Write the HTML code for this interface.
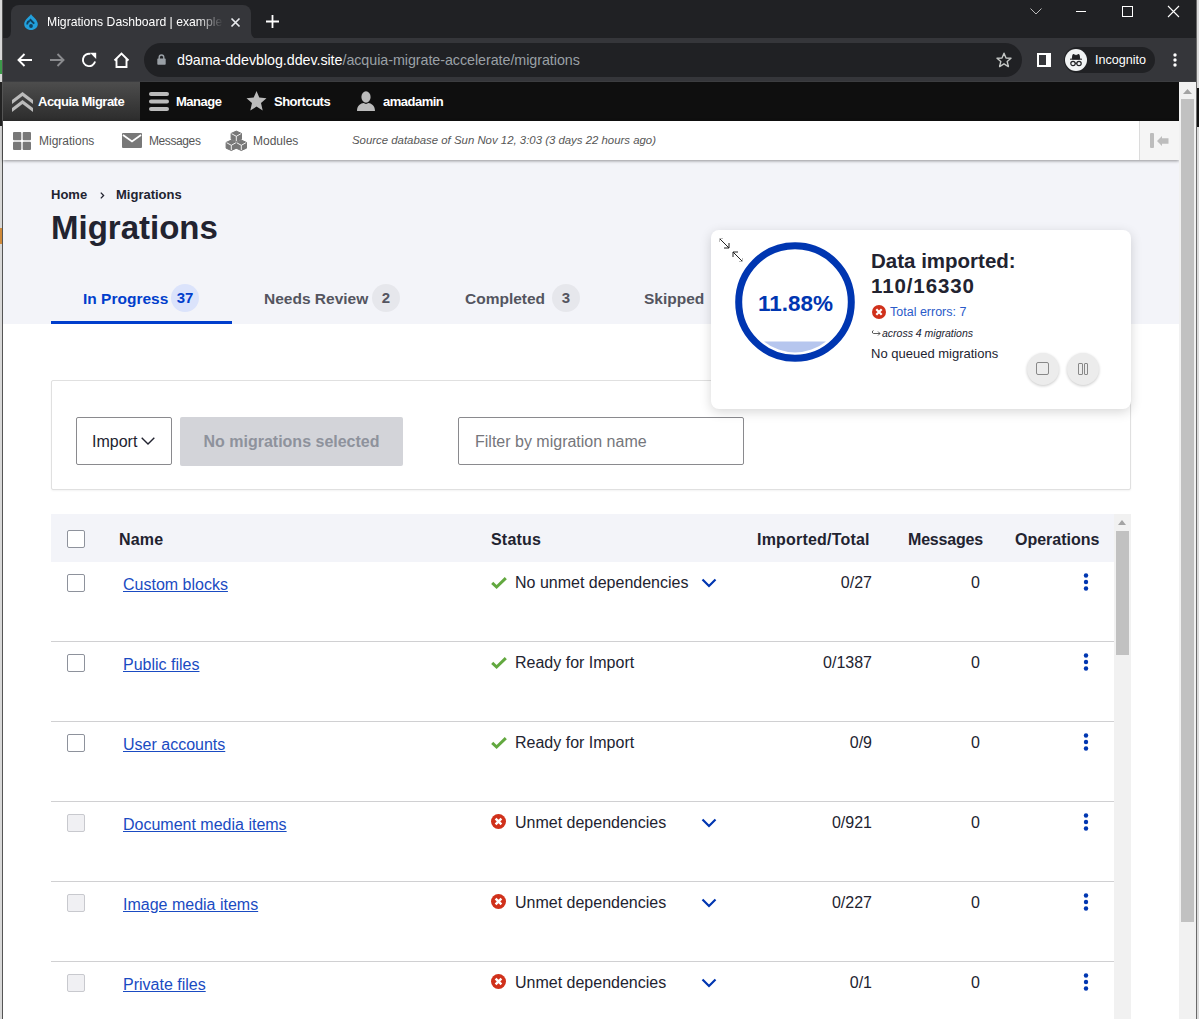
<!DOCTYPE html>
<html><head><meta charset="utf-8">
<style>
*{box-sizing:border-box;margin:0;padding:0}
html,body{width:1199px;height:1019px;overflow:hidden;background:#e9e9e9;font-family:"Liberation Sans",sans-serif}
.a{position:absolute}
svg{position:absolute;overflow:visible}
/* chrome */
#frame{left:3px;top:0;width:1193px;height:82px;background:#202124}
#tab{left:11px;top:5px;width:240px;height:33px;background:#35363a;border-radius:8px 8px 0 0}
#toolbar{left:3px;top:38px;width:1193px;height:44px;background:#35363a}
#omni{left:144px;top:43px;width:878px;height:34px;background:#202124;border-radius:17px}
#incog{left:1064px;top:47px;width:91px;height:26px;background:#202124;border-radius:13px}
.ct{color:#fff;font-size:13px;white-space:nowrap}
/* drupal toolbar */
#dtb{left:3px;top:82px;width:1176px;height:39px;background:#0f0f0f}
#am{left:3px;top:82px;width:137px;height:39px;background:linear-gradient(#4d4d4d,#2c2c2c)}
.dt{color:#fff;font-weight:bold;font-size:13px;letter-spacing:-0.5px;white-space:nowrap}
#tray{left:3px;top:121px;width:1176px;height:39px;background:#fff;box-shadow:0 1px 3px rgba(0,0,0,.4)}
.tr{color:#565656;font-size:12px;white-space:nowrap}
#page{left:3px;top:160px;width:1176px;height:164px;background:#f3f4f9}
#white{left:3px;top:324px;width:1176px;height:695px;background:#fff}
.bc{color:#222330;font-size:13px;font-weight:bold;white-space:nowrap}
h1{position:absolute;left:51px;top:209px;font-size:33px;font-weight:bold;color:#222330;white-space:nowrap}
.tab{color:#545560;font-size:15.5px;font-weight:bold;white-space:nowrap}
.badge{position:absolute;width:28px;height:28px;border-radius:14px;background:#e6e7ec;text-align:center;line-height:28px;font-size:15px;font-weight:bold;color:#545560}
#card{left:51px;top:380px;width:1080px;height:110px;background:#fff;border:1px solid #e0e0e0;border-radius:2px;box-shadow:0 1px 2px rgba(0,0,0,.05)}
#sel{left:76px;top:417px;width:96px;height:48px;border:1px solid #8a8a8e;border-radius:2px;background:#fff}
#nobtn{left:180px;top:417px;width:223px;height:49px;background:#d3d4d9;border-radius:2px;color:#8e929c;font-weight:bold;font-size:16px;text-align:center;line-height:49px;white-space:nowrap}
#filter{left:458px;top:417px;width:286px;height:48px;border:1px solid #8a8a8e;border-radius:2px;background:#fff;color:#75767b;font-size:16px;padding-left:16px;line-height:47px;white-space:nowrap}
#thead{left:51px;top:514px;width:1063px;height:48px;background:#f3f4f9}
.th{color:#222330;font-size:16px;font-weight:bold;white-space:nowrap;letter-spacing:0.2px}
.td{color:#222330;font-size:16px;white-space:nowrap}
.lnk{color:#1a4bc2;font-size:16px;text-decoration:underline;white-space:nowrap}
.cb{width:18px;height:18px;border:1px solid #8e929c;border-radius:2px;background:#fff}
.cbd{border-color:#c8c9ce;background:#f0f0f3}
.rl{left:51px;width:1063px;height:1px;background:#d0d0d2}
.num{text-align:right;width:120px}
/* popup */
#pop{left:711px;top:230px;width:420px;height:179px;background:#fff;border-radius:8px;box-shadow:0 3px 12px rgba(0,0,0,.16)}
.rbtn{width:32px;height:32px;border-radius:16px;background:#ececec;box-shadow:0 1px 3px rgba(0,0,0,.22)}
/* scrollbars */
#sb{left:1179px;top:82px;width:17px;height:937px;background:#f1f1f1}
#sbth{left:1181px;top:99px;width:13px;height:823px;background:#c1c1c1}
#isb{left:1114px;top:514px;width:17px;height:505px;background:#f1f1f1}
#isbth{left:1116px;top:531px;width:13px;height:124px;background:#c1c1c1}
</style></head><body>
<!-- chrome -->
<div class="a" style="left:0;top:0;width:3px;height:1019px;background:#d8d8d8"></div>
<div class="a" style="left:2px;top:0;width:1px;height:1019px;background:#555"></div><div class="a" style="left:0;top:60px;width:2px;height:14px;background:#3c9a4a"></div><div class="a" style="left:0;top:82px;width:2px;height:44px;background:#222"></div><div class="a" style="left:0;top:228px;width:2px;height:16px;background:#d08a3a"></div>
<div class="a" style="left:1196px;top:0;width:3px;height:1019px;background:#dcdcdc"></div><div class="a" style="left:1196px;top:0;width:1px;height:1019px;background:#6a6a6a"></div><div class="a" style="left:1197px;top:88px;width:2px;height:39px;background:#111"></div>
<div class="a" id="frame"></div>
<div class="a" id="toolbar"></div>
<div class="a" id="tab"></div>
<svg width="8" height="8" style="left:3px;top:31px" viewBox="0 0 8 8"><path d="M0 8 Q8 8 8 0 L8 8 Z" fill="#35363a"/></svg>
<svg width="8" height="8" style="left:251px;top:31px" viewBox="0 0 8 8"><path d="M0 0 Q0 8 8 8 L0 8 Z" fill="#35363a"/></svg>
<svg width="14" height="16" style="left:24px;top:14px" viewBox="0 0 14 16"><path d="M7 0 C8 2.5 13.8 5.5 13.8 10 C13.8 13.6 10.8 16 7 16 C3.2 16 0.2 13.6 0.2 10 C0.2 5.5 6 2.5 7 0 Z" fill="#22a0dc"/><path d="M5.8 5.2 L10.2 9.6" stroke="#11405e" stroke-width="2"/><path d="M3.2 10.5 C3.2 8.5 4.5 7.2 5.8 7" stroke="#11405e" stroke-width="1.8" fill="none"/><circle cx="7" cy="12" r="1.9" fill="#11405e"/></svg>
<div class="a ct" style="left:47px;top:15px;font-size:12.2px;width:176px;overflow:hidden;-webkit-mask-image:linear-gradient(90deg,#000 150px,transparent 176px)">Migrations Dashboard | example.com</div>
<svg width="9" height="9" style="left:230.5px;top:17.5px" viewBox="0 0 9 9"><path d="M0.5 0.5 L8.5 8.5 M8.5 0.5 L0.5 8.5" stroke="#e8eaed" stroke-width="1.7"/></svg>
<svg width="13" height="13" style="left:266px;top:15px" viewBox="0 0 13 13"><path d="M6.5 0 V13 M0 6.5 H13" stroke="#fff" stroke-width="1.8"/></svg>
<svg width="12" height="7" style="left:1030px;top:8px" viewBox="0 0 12 7"><path d="M0.5 0.5 L6 6 L11.5 0.5" fill="none" stroke="#bbb" stroke-width="1"/></svg>
<div class="a" style="left:1076px;top:11px;width:10px;height:1px;background:#fff"></div>
<div class="a" style="left:1122px;top:6px;width:11px;height:11px;border:1px solid #fff"></div>
<svg width="11" height="11" style="left:1168px;top:6px" viewBox="0 0 11 11"><path d="M0 0 L11 11 M11 0 L0 11" stroke="#fff" stroke-width="1.1"/></svg>
<!-- toolbar icons -->
<svg width="16" height="14" style="left:17px;top:53px" viewBox="0 0 16 14"><path d="M15 7 H2 M7.5 1 L1.5 7 L7.5 13" fill="none" stroke="#fff" stroke-width="1.9"/></svg>
<svg width="16" height="14" style="left:49px;top:53px" viewBox="0 0 16 14"><path d="M1 7 H14 M8.5 1 L14.5 7 L8.5 13" fill="none" stroke="#8a8b8e" stroke-width="1.9"/></svg>
<svg width="16" height="16" style="left:81px;top:52px" viewBox="0 0 16 16"><path d="M9.5 1.9 A6.2 6.2 0 1 0 14.1 9.6" fill="none" stroke="#fff" stroke-width="1.9"/><path d="M9 0.8 H15.2 V7 Z" fill="#fff"/></svg>
<svg width="17" height="16" style="left:113px;top:52px" viewBox="0 0 17 16"><path d="M1.5 8.5 L8.5 1.5 L15.5 8.5 M3.5 7 V15 H13.5 V7" fill="none" stroke="#fff" stroke-width="1.9"/></svg>
<div class="a" id="omni"></div>
<svg width="9" height="11" style="left:157px;top:54px" viewBox="0 0 9 11"><path d="M2.2 5 V3.3 A2.3 2.3 0 0 1 6.8 3.3 V5" fill="none" stroke="#9aa0a6" stroke-width="1.4"/><rect x="0.3" y="4.6" width="8.4" height="6.2" rx="0.8" fill="#9aa0a6"/></svg>
<div class="a ct" style="left:177px;top:52px;font-size:14.3px;letter-spacing:-0.05px">d9ama-ddevblog.ddev.site<span style="color:#9aa0a6">/acquia-migrate-accelerate/migrations</span></div>
<svg width="16" height="16" style="left:996px;top:52px" viewBox="0 0 16 16"><path d="M8 1.2 L10 6 L15 6.3 L11.2 9.5 L12.4 14.6 L8 11.8 L3.6 14.6 L4.8 9.5 L1 6.3 L6 6 Z" fill="none" stroke="#c4c7c5" stroke-width="1.4" stroke-linejoin="round"/></svg>
<svg width="14" height="14" style="left:1037px;top:53px" viewBox="0 0 14 14"><rect x="0" y="0" width="14" height="14" fill="#fff"/><rect x="2" y="2" width="7" height="10" fill="#35363a"/></svg>
<div class="a" id="incog"></div>
<svg width="22" height="22" style="left:1065px;top:49px" viewBox="0 0 22 22"><circle cx="11" cy="11" r="11" fill="#f1f3f4"/><path d="M5 10.2 H17 M7.2 10 L8 5.5 L11 6.5 L14 5.5 L14.8 10 Z" fill="#202124" stroke="#202124" stroke-width="1"/><circle cx="8" cy="14.5" r="2.2" fill="none" stroke="#202124" stroke-width="1.2"/><circle cx="14" cy="14.5" r="2.2" fill="none" stroke="#202124" stroke-width="1.2"/><path d="M10 14.3 H12" stroke="#202124" stroke-width="1"/></svg>
<div class="a ct" style="left:1095px;top:53px;font-size:12.6px">Incognito</div>
<svg width="4" height="14" style="left:1173px;top:53px" viewBox="0 0 4 14"><circle cx="2" cy="2" r="1.7" fill="#fff"/><circle cx="2" cy="7" r="1.7" fill="#fff"/><circle cx="2" cy="12" r="1.7" fill="#fff"/></svg>
<div class="a" style="left:3px;top:81px;width:1193px;height:1px;background:#3c3d40"></div>

<!-- drupal toolbar -->
<div class="a" id="dtb"></div>
<div class="a" id="am"></div>
<svg width="21" height="20" style="left:12px;top:92px" viewBox="0 0 21 20"><path d="M0 8 L10.5 0 L21 8 V12 L10.5 4 L0 12 Z M0 16 L10.5 8 L21 16 V20 L10.5 12 L0 20 Z" fill="#bbb"/></svg>
<div class="a dt" style="left:38px;top:94px">Acquia Migrate</div>
<svg width="20" height="19" style="left:149px;top:92px" viewBox="0 0 20 19"><rect x="0" y="0" width="20" height="4" rx="2" fill="#bbb"/><rect x="0" y="7.5" width="20" height="4" rx="2" fill="#bbb"/><rect x="0" y="15" width="20" height="4" rx="2" fill="#bbb"/></svg>
<div class="a dt" style="left:176px;top:94px">Manage</div>
<svg width="21" height="20" style="left:246px;top:91px" viewBox="0 0 21 20"><path d="M10.5 0 L13.3 6.6 L20.5 7.3 L15 12 L16.7 19.5 L10.5 15.6 L4.3 19.5 L6 12 L0.5 7.3 L7.7 6.6 Z" fill="#bbb"/></svg>
<div class="a dt" style="left:274px;top:94px">Shortcuts</div>
<svg width="18" height="20" style="left:357px;top:91px" viewBox="0 0 18 20"><ellipse cx="9" cy="6" rx="4.6" ry="5.8" fill="#bbb"/><path d="M0 20 C0 14 4 12.5 6.5 12 L9 13 L11.5 12 C14 12.5 18 14 18 20 Z" fill="#bbb"/></svg>
<div class="a dt" style="left:383px;top:94px">amadamin</div>

<div class="a" id="page"></div>
<div class="a" id="white"></div>
<div class="a" id="tray"></div>
<svg width="18" height="18" style="left:13px;top:132px" viewBox="0 0 18 18"><rect x="0" y="0" width="8.3" height="8.3" rx="1" fill="#787878"/><rect x="9.7" y="0" width="8.3" height="8.3" rx="1" fill="#787878"/><rect x="0" y="9.7" width="8.3" height="8.3" rx="1" fill="#787878"/><rect x="9.7" y="9.7" width="8.3" height="8.3" rx="1" fill="#787878"/></svg>
<div class="a tr" style="left:39px;top:134px">Migrations</div>
<svg width="20" height="15" style="left:122px;top:133px" viewBox="0 0 20 15"><rect x="0" y="0" width="20" height="15" rx="1" fill="#787878"/><path d="M1 2 L10 8.5 L19 2" fill="none" stroke="#fff" stroke-width="1.8"/></svg>
<div class="a tr" style="left:149px;top:134px;letter-spacing:-0.4px">Messages</div>
<svg width="21" height="20" style="left:226px;top:131px" viewBox="0 0 21 20"><path d="M10.3 0.09999999999999964 L15.5 2.4399999999999995 L15.5 8.16 L10.3 10.5 L5.1000000000000005 8.16 L5.1000000000000005 2.4399999999999995 Z M5.3 9.100000000000001 L10.5 11.440000000000001 L10.5 17.16 L5.3 19.5 L0.09999999999999964 17.16 L0.09999999999999964 11.440000000000001 Z M15.3 9.100000000000001 L20.5 11.440000000000001 L20.5 17.16 L15.3 19.5 L10.100000000000001 17.16 L10.100000000000001 11.440000000000001 Z" fill="#787878" stroke="#787878" stroke-width="1" stroke-linejoin="round"/><path d="M5.7 2.7399999999999993 L10.3 5.3 L14.9 2.7399999999999993 M10.3 5.3 V10.0 M0.6999999999999996 11.740000000000002 L5.3 14.3 L9.9 11.740000000000002 M5.3 14.3 V19.0 M10.700000000000001 11.740000000000002 L15.3 14.3 L19.9 11.740000000000002 M15.3 14.3 V19.0" fill="none" stroke="#fff" stroke-width="0.9"/></svg>
<div class="a tr" style="left:253px;top:134px">Modules</div>
<div class="a tr" style="left:352px;top:134px;font-size:11.4px;font-style:italic">Source database of Sun Nov 12, 3:03 (3 days 22 hours ago)</div>
<div class="a" style="left:1139px;top:121px;width:40px;height:39px;background:#f5f5f5;border-left:1px solid #dcdcdc"></div>
<div class="a" style="left:1150px;top:133px;width:4px;height:15px;background:#bdbdbd;border-radius:1px"></div>
<svg width="12" height="10" style="left:1157px;top:136px" viewBox="0 0 12 10"><path d="M0 5 L5 0 V2.3 H11.5 V7.7 H5 V10 Z" fill="#bdbdbd"/></svg>

<!-- page -->
<div class="a bc" style="left:51px;top:187px">Home</div>
<svg width="5" height="7" style="left:99.5px;top:191.5px" viewBox="0 0 5 7"><path d="M0.8 0.6 L3.6 3.5 L0.8 6.4" fill="none" stroke="#222330" stroke-width="1.3"/></svg>
<div class="a bc" style="left:116px;top:187px">Migrations</div>
<h1>Migrations</h1>

<div class="a tab" style="left:83px;top:290px;color:#003ecc">In Progress</div>
<div class="a badge" style="left:171px;top:284px;background:#dbe3fb;color:#003ecc">37</div>
<div class="a" style="left:51px;top:321px;width:181px;height:3px;background:#003ecc"></div>
<div class="a tab" style="left:264px;top:290px">Needs Review</div>
<div class="a badge" style="left:372px;top:284px">2</div>
<div class="a tab" style="left:465px;top:290px">Completed</div>
<div class="a badge" style="left:552px;top:284px">3</div>
<div class="a tab" style="left:644px;top:290px">Skipped</div>

<div class="a" id="card"></div>
<div class="a" id="sel"><span class="a td" style="left:15px;top:15px">Import</span></div>
<svg width="14" height="8" style="left:141px;top:437px" viewBox="0 0 14 8"><path d="M0.7 0.7 L7 7 L13.3 0.7" fill="none" stroke="#222330" stroke-width="1.4"/></svg>
<div class="a" id="nobtn">No migrations selected</div>
<div class="a" id="filter">Filter by migration name</div>

<div class="a" id="thead"></div>
<div class="a cb" style="left:67px;top:530px"></div>
<div class="a th" style="left:119px;top:531px">Name</div>
<div class="a th" style="left:491px;top:531px">Status</div>
<div class="a th" style="left:757px;top:531px">Imported/Total</div>
<div class="a th" style="left:908px;top:531px;letter-spacing:-0.2px">Messages</div>
<div class="a th" style="left:1015px;top:531px;letter-spacing:0">Operations</div>

<div class="a cb" style="left:67px;top:574px"></div>
<div class="a lnk" style="left:123px;top:576px">Custom blocks</div>
<svg width="16" height="12" style="left:491px;top:577px" viewBox="0 0 16 12"><path d="M1.2 5.8 L5.6 10 L14.8 1.2" fill="none" stroke="#62a83f" stroke-width="3"/></svg>
<div class="a td" style="left:515px;top:574px">No unmet dependencies</div>
<svg width="16" height="10" style="left:701px;top:578px" viewBox="0 0 16 10"><path d="M1.5 1.5 L8 8 L14.5 1.5" fill="none" stroke="#0036b1" stroke-width="2.2"/></svg>
<div class="a td num" style="left:752px;top:574px">0/27</div>
<div class="a td num" style="left:860px;top:574px">0</div>
<svg width="6" height="18" style="left:1083px;top:573px" viewBox="0 0 6 18"><circle cx="3" cy="2.5" r="2.2" fill="#0036b1"/><circle cx="3" cy="9" r="2.2" fill="#0036b1"/><circle cx="3" cy="15.5" r="2.2" fill="#0036b1"/></svg>
<div class="a rl" style="top:641px"></div>
<div class="a cb" style="left:67px;top:654px"></div>
<div class="a lnk" style="left:123px;top:656px">Public files</div>
<svg width="16" height="12" style="left:491px;top:657px" viewBox="0 0 16 12"><path d="M1.2 5.8 L5.6 10 L14.8 1.2" fill="none" stroke="#62a83f" stroke-width="3"/></svg>
<div class="a td" style="left:515px;top:654px">Ready for Import</div>
<div class="a td num" style="left:752px;top:654px">0/1387</div>
<div class="a td num" style="left:860px;top:654px">0</div>
<svg width="6" height="18" style="left:1083px;top:653px" viewBox="0 0 6 18"><circle cx="3" cy="2.5" r="2.2" fill="#0036b1"/><circle cx="3" cy="9" r="2.2" fill="#0036b1"/><circle cx="3" cy="15.5" r="2.2" fill="#0036b1"/></svg>
<div class="a rl" style="top:721px"></div>
<div class="a cb" style="left:67px;top:734px"></div>
<div class="a lnk" style="left:123px;top:736px">User accounts</div>
<svg width="16" height="12" style="left:491px;top:737px" viewBox="0 0 16 12"><path d="M1.2 5.8 L5.6 10 L14.8 1.2" fill="none" stroke="#62a83f" stroke-width="3"/></svg>
<div class="a td" style="left:515px;top:734px">Ready for Import</div>
<div class="a td num" style="left:752px;top:734px">0/9</div>
<div class="a td num" style="left:860px;top:734px">0</div>
<svg width="6" height="18" style="left:1083px;top:733px" viewBox="0 0 6 18"><circle cx="3" cy="2.5" r="2.2" fill="#0036b1"/><circle cx="3" cy="9" r="2.2" fill="#0036b1"/><circle cx="3" cy="15.5" r="2.2" fill="#0036b1"/></svg>
<div class="a rl" style="top:801px"></div>
<div class="a cb cbd" style="left:67px;top:814px"></div>
<div class="a lnk" style="left:123px;top:816px">Document media items</div>
<svg width="15" height="15" style="left:491px;top:814px" viewBox="0 0 15 15"><circle cx="7.5" cy="7.5" r="7.5" fill="#d0311b"/><path d="M4.6 4.6 L10.4 10.4 M10.4 4.6 L4.6 10.4" stroke="#fff" stroke-width="2.4"/></svg>
<div class="a td" style="left:515px;top:814px">Unmet dependencies</div>
<svg width="16" height="10" style="left:701px;top:818px" viewBox="0 0 16 10"><path d="M1.5 1.5 L8 8 L14.5 1.5" fill="none" stroke="#0036b1" stroke-width="2.2"/></svg>
<div class="a td num" style="left:752px;top:814px">0/921</div>
<div class="a td num" style="left:860px;top:814px">0</div>
<svg width="6" height="18" style="left:1083px;top:813px" viewBox="0 0 6 18"><circle cx="3" cy="2.5" r="2.2" fill="#0036b1"/><circle cx="3" cy="9" r="2.2" fill="#0036b1"/><circle cx="3" cy="15.5" r="2.2" fill="#0036b1"/></svg>
<div class="a rl" style="top:881px"></div>
<div class="a cb cbd" style="left:67px;top:894px"></div>
<div class="a lnk" style="left:123px;top:896px">Image media items</div>
<svg width="15" height="15" style="left:491px;top:894px" viewBox="0 0 15 15"><circle cx="7.5" cy="7.5" r="7.5" fill="#d0311b"/><path d="M4.6 4.6 L10.4 10.4 M10.4 4.6 L4.6 10.4" stroke="#fff" stroke-width="2.4"/></svg>
<div class="a td" style="left:515px;top:894px">Unmet dependencies</div>
<svg width="16" height="10" style="left:701px;top:898px" viewBox="0 0 16 10"><path d="M1.5 1.5 L8 8 L14.5 1.5" fill="none" stroke="#0036b1" stroke-width="2.2"/></svg>
<div class="a td num" style="left:752px;top:894px">0/227</div>
<div class="a td num" style="left:860px;top:894px">0</div>
<svg width="6" height="18" style="left:1083px;top:893px" viewBox="0 0 6 18"><circle cx="3" cy="2.5" r="2.2" fill="#0036b1"/><circle cx="3" cy="9" r="2.2" fill="#0036b1"/><circle cx="3" cy="15.5" r="2.2" fill="#0036b1"/></svg>
<div class="a rl" style="top:961px"></div>
<div class="a cb cbd" style="left:67px;top:974px"></div>
<div class="a lnk" style="left:123px;top:976px">Private files</div>
<svg width="15" height="15" style="left:491px;top:974px" viewBox="0 0 15 15"><circle cx="7.5" cy="7.5" r="7.5" fill="#d0311b"/><path d="M4.6 4.6 L10.4 10.4 M10.4 4.6 L4.6 10.4" stroke="#fff" stroke-width="2.4"/></svg>
<div class="a td" style="left:515px;top:974px">Unmet dependencies</div>
<svg width="16" height="10" style="left:701px;top:978px" viewBox="0 0 16 10"><path d="M1.5 1.5 L8 8 L14.5 1.5" fill="none" stroke="#0036b1" stroke-width="2.2"/></svg>
<div class="a td num" style="left:752px;top:974px">0/1</div>
<div class="a td num" style="left:860px;top:974px">0</div>
<svg width="6" height="18" style="left:1083px;top:973px" viewBox="0 0 6 18"><circle cx="3" cy="2.5" r="2.2" fill="#0036b1"/><circle cx="3" cy="9" r="2.2" fill="#0036b1"/><circle cx="3" cy="15.5" r="2.2" fill="#0036b1"/></svg>

<div class="a" id="isb"></div>
<div class="a" id="isbth"></div>
<svg width="8" height="5" style="left:1118px;top:520px" viewBox="0 0 8 5"><path d="M0 5 L4 0 L8 5 Z" fill="#a3a3a3"/></svg>

<!-- popup -->
<div class="a" id="pop"></div>
<svg width="26" height="26" style="left:718px;top:237px" viewBox="0 0 26 26"><path d="M1.5 1.5 H5 M1.5 1.5 V5 M24.5 24.5 H21 M24.5 24.5 V21" fill="none" stroke="#bbb" stroke-width="1"/><path d="M2 2 L11 11 M11 6 V11 H6" fill="none" stroke="#222" stroke-width="1"/><path d="M24 24 L15 15 M15 20 V15 H20" fill="none" stroke="#222" stroke-width="1"/></svg>
<svg width="120" height="120" style="left:735px;top:242px" viewBox="0 0 120 120"><circle cx="60" cy="60" r="56.3" fill="none" stroke="#0036b1" stroke-width="7"/><path d="M29 99.4 A49 49 0 0 0 91 99.4 Z" fill="#b6c6ee"/></svg>
<div class="a" style="left:745px;top:291px;width:101px;text-align:center;font-size:22.5px;font-weight:bold;color:#0036b1;white-space:nowrap">11.88%</div>
<div class="a" style="left:871px;top:249px;font-size:20.5px;font-weight:bold;color:#222330;white-space:nowrap">Data imported:</div>
<div class="a" style="left:871px;top:274px;font-size:20.5px;font-weight:bold;color:#222330;white-space:nowrap;letter-spacing:0.9px">110/16330</div>
<svg width="14" height="14" style="left:872px;top:305px" viewBox="0 0 14 14"><circle cx="7" cy="7" r="7" fill="#d0311b"/><path d="M4.3 4.3 L9.7 9.7 M9.7 4.3 L4.3 9.7" stroke="#fff" stroke-width="2.2"/></svg>
<div class="a" style="left:890px;top:305px;font-size:12.5px;color:#2a5bc9;white-space:nowrap">Total errors: 7</div>
<svg width="9" height="6" style="left:872px;top:330px" viewBox="0 0 9 6"><path d="M1.5 0.5 C0 0.5 0 3.5 1.5 3.5 H8 M6 1.5 L8 3.5 L6 5.5" fill="none" stroke="#333" stroke-width="0.8"/></svg>
<div class="a" style="left:882px;top:327px;font-size:10.5px;font-style:italic;color:#222330;white-space:nowrap">across 4 migrations</div>
<div class="a" style="left:871px;top:346px;font-size:13px;color:#222330;white-space:nowrap">No queued migrations</div>
<div class="a rbtn" style="left:1027px;top:353px"></div>
<div class="a" style="left:1036px;top:362px;width:13px;height:13px;border:1.5px solid #888;border-radius:2px"></div>
<div class="a rbtn" style="left:1067px;top:353px"></div>
<div class="a" style="left:1078px;top:363px;width:4.5px;height:12px;border:1.3px solid #888;border-radius:1px"></div>
<div class="a" style="left:1083.5px;top:363px;width:4.5px;height:12px;border:1.3px solid #888;border-radius:1px"></div>

<div class="a" id="sb"></div>
<div class="a" id="sbth"></div>
<svg width="9" height="5" style="left:1183px;top:89px" viewBox="0 0 9 5"><path d="M0 5 L4.5 0 L9 5 Z" fill="#a3a3a3"/></svg>
</body></html>
